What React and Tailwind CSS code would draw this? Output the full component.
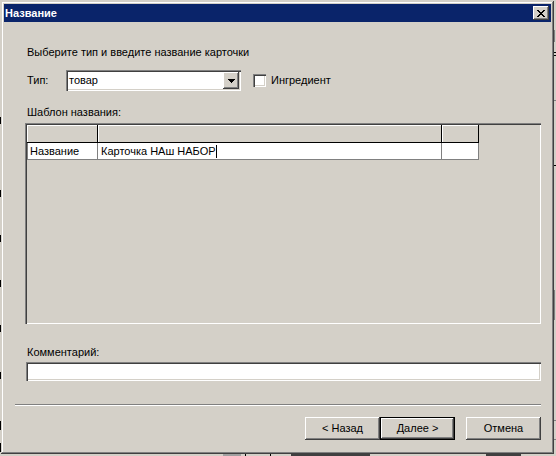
export default function App() {
  const raised =
    "shadow-[inset_-1px_-1px_#404040,inset_1px_1px_#ffffff,inset_-2px_-2px_#808080,inset_2px_2px_#d4d0c8]";
  const sunken =
    "shadow-[inset_1px_1px_#808080,inset_2px_2px_#404040,inset_-1px_-1px_#ffffff,inset_-2px_-2px_#d4d0c8]";
  const header =
    "h-[18px] bg-[#d4d0c8] shadow-[inset_-1px_-1px_#000000,inset_1px_1px_#ffffff]";

  return (
    <div className="relative w-[556px] h-[456px] overflow-hidden bg-[#d4d0c8] font-['Liberation_Sans',Arial,sans-serif] text-[11px] leading-[13px] text-black">
      {/* fragments of the application behind the dialog */}
      <div className="absolute left-0 top-[117px] w-[1px] h-[7px] bg-black" />
      <div className="absolute left-0 top-[190px] w-[1px] h-[7px] bg-black" />
      <div className="absolute left-0 top-[235px] w-[1px] h-[7px] bg-black" />
      <div className="absolute left-0 top-[280px] w-[1px] h-[7px] bg-black" />
      <div className="absolute left-0 top-[325px] w-[1px] h-[7px] bg-black" />
      <div className="absolute left-0 top-[372px] w-[1px] h-[7px] bg-black" />
      <div className="absolute left-0 top-[421px] w-[1px] h-[9px] bg-black" />
      <div className="absolute left-0 top-[443px] w-[1px] h-[9px] bg-black" />
      <div className="absolute left-[554px] top-[30px] w-[1px] h-[12px] bg-[#808080]" />
      <div className="absolute left-[554px] top-[52px] w-[2px] h-[1px] bg-black" />
      <div className="absolute left-[554px] top-[55px] w-[2px] h-[1px] bg-black" />
      <div className="absolute left-[554px] top-[100px] w-[2px] h-[1px] bg-[#808080]" />
      <div className="absolute left-[554px] top-[165px] w-[2px] h-[1px] bg-black" />
      <div className="absolute left-[554px] top-[290px] w-[1px] h-[30px] bg-[#808080]" />
      <div className="absolute left-[554px] top-[420px] w-[2px] h-[1px] bg-[#808080]" />
      <div className="absolute left-[554px] top-[439px] w-[2px] h-[1px] bg-[#808080]" />
      <div className="absolute left-[223px] top-[454px] w-[18px] h-[2px] bg-[#a0a0a0]" />
      <div className="absolute left-[245px] top-[454px] w-[1px] h-[2px] bg-black" />
      <div className="absolute left-[270px] top-[454px] w-[1px] h-[2px] bg-black" />
      <div className="absolute left-[291px] top-[454px] w-[79px] h-[2px] bg-[#404040]" />
      <div className="absolute left-[486px] top-[454px] w-[35px] h-[2px] bg-[#404040]" />

      {/* dialog window */}
      <div className="absolute left-[1px] top-[1px] w-[553px] h-[453px] p-[3px] flex flex-col bg-[#d4d0c8] shadow-[inset_-1px_-1px_#404040,inset_1px_1px_#d4d0c8,inset_-2px_-2px_#808080,inset_2px_2px_#ffffff]">
        {/* title bar */}
        <div className="h-[18px] shrink-0 bg-[#0a246a] flex items-center justify-between pl-[1px] pr-[2px]">
          <span className="text-white font-bold">Название</span>
          <div className={`w-[16px] h-[14px] flex items-center justify-center bg-[#d4d0c8] ${raised}`}>
            <svg width="8" height="7" viewBox="0 0 8 7" shapeRendering="crispEdges">
              <path
                d="M0 0h2v1h-2zM6 0h2v1h-2zM1 1h2v1h-2zM5 1h2v1h-2zM2 2h4v1h-4zM3 3h2v1h-2zM2 4h4v1h-4zM1 5h2v1h-2zM5 5h2v1h-2zM0 6h2v1h-2zM6 6h2v1h-2z"
                fill="#000"
              />
            </svg>
          </div>
        </div>

        {/* body */}
        <div className="flex-1 flex flex-col pr-[10px]">
          <div className="ml-[23px] mt-[24px] h-[13px]">Выберите тип и введите название карточки</div>

          <div className="ml-[23px] mt-[11px] h-[21px] flex items-center">
            <div className="w-[39px]">Тип:</div>
            <div className={`w-[175px] h-[21px] bg-white p-[2px] flex ${sunken}`}>
              <div className="flex-1 flex items-center pl-[1px]">товар</div>
              <div className={`w-[16px] h-[17px] bg-[#d4d0c8] flex items-center justify-center ${raised}`}>
                <svg width="7" height="4" viewBox="0 0 7 4" shapeRendering="crispEdges">
                  <path d="M0 0h7v1h-7zM1 1h5v1h-5zM2 2h3v1h-3zM3 3h1v1h-1z" fill="#000" />
                </svg>
              </div>
            </div>
            <div className={`ml-[12px] w-[13px] h-[13px] bg-white ${sunken}`} />
            <div className="ml-[5px]">Ингредиент</div>
          </div>

          <div className="ml-[23px] mt-[15px] h-[13px]">Шаблон названия:</div>

          <div className={`ml-[21px] mt-[4px] h-[201px] p-[2px] bg-[#d4d0c8] ${sunken}`}>
            <div className="flex">
              <div className={`w-[71px] ${header}`} />
              <div className={`w-[344px] ${header}`} />
              <div className={`w-[37px] ${header}`} />
            </div>
            <div className="flex">
              <div className="w-[71px] h-[17px] bg-white border-l border-r border-b border-[#808080] pl-[2px] flex items-center">
                Название
              </div>
              <div className="w-[344px] h-[17px] bg-white border-r border-b border-[#808080] pl-[3px] flex items-center">
                <span>Карточка НАш НАБОР</span>
                <span className="w-[1px] h-[13px] bg-black" />
              </div>
              <div className="w-[37px] h-[17px] bg-white border-r border-b border-[#808080]" />
            </div>
          </div>

          <div className="ml-[23px] mt-[22px] h-[13px]">Комментарий:</div>

          <div className={`ml-[22px] mt-[3px] h-[19px] bg-white ${sunken}`} />

          <div className="ml-[11px] mt-[23px] h-[2px] border-t border-b border-t-[#808080] border-b-white" />

          <div className="mt-[11px] flex justify-end">
            <div className={`w-[75px] h-[23px] flex items-center justify-center bg-[#d4d0c8] ${raised}`}>
              &lt; Назад
            </div>
            <div className="w-[75px] h-[23px] border border-black">
              <div className={`w-full h-full flex items-center justify-center bg-[#d4d0c8] ${raised}`}>
                Далее &gt;
              </div>
            </div>
            <div className={`ml-[11px] w-[75px] h-[23px] flex items-center justify-center bg-[#d4d0c8] ${raised}`}>
              Отмена
            </div>
          </div>
        </div>
      </div>
    </div>
  );
}
